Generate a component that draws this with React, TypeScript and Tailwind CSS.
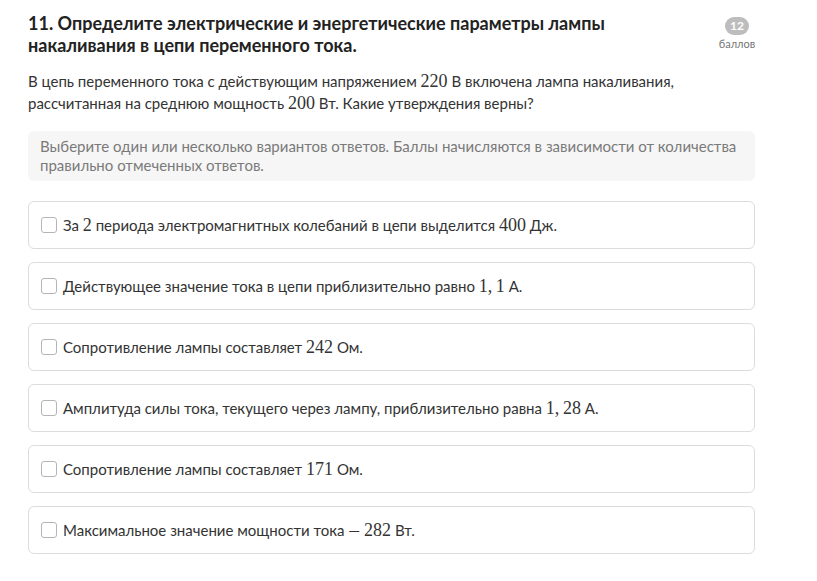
import React from 'react';

function M({ children }: { children: React.ReactNode }) {
  return <span className="font-['Liberation_Serif',serif] text-[18px]">{children}</span>;
}

const options: React.ReactNode[] = [
  <>За <M>2</M> периода электромагнитных колебаний в цепи выделится <M>400</M> Дж.</>,
  <>Действующее значение тока в цепи приблизительно равно <M>1,&thinsp;1</M> А.</>,
  <>Сопротивление лампы составляет <M>242</M> Ом.</>,
  <>Амплитуда силы тока, текущего через лампу, приблизительно равна <M>1,&thinsp;28</M> А.</>,
  <>Сопротивление лампы составляет <M>171</M> Ом.</>,
  <>Максимальное значение мощности тока — <M>282</M> Вт.</>,
];

export default function App() {
  return (
    <div className="min-h-[581px] bg-white font-['Lato','Noto_Sans',sans-serif] text-[#333]">
      <div className="ml-[28px] w-[727px] pt-[12px]">
        {/* заголовок */}
        <div className="flex items-start justify-between">
          <h2 className="text-[18px] font-bold leading-[22px] text-[#222]">
            11. Определите электрические и энергетические параметры лампы
            <br />
            накаливания в цепи переменного тока.
          </h2>
          <div className="mr-[-7px] mt-[5px] flex w-[50px] flex-col items-center">
            <span className="flex h-[18px] w-[24px] items-center justify-center rounded-full bg-[#bdbdbd] text-[12px] font-bold leading-none text-white">
              12
            </span>
            <span className="mt-[2px] text-[11px] leading-[14px] text-[#757575]">баллов</span>
          </div>
        </div>

        <p className="mt-[14px] text-[15px] leading-[22px] text-[#333]">
          В цепь переменного тока с действующим напряжением <M>220</M> В включена лампа накаливания,
          <br />
          рассчитанная на среднюю мощность <M>200</M> Вт. Какие утверждения верны?
        </p>

        <div className="mt-[17px] rounded-[6px] bg-[#f6f6f6] px-[12px] py-[6px] text-[15px] leading-[19px] text-[#7a7a7a]">
          Выберите один или несколько вариантов ответов. Баллы начисляются в зависимости от количества
          <br />
          правильно отмеченных ответов.
        </div>

        <div className="mt-[20px] flex flex-col gap-[13px]">
          {options.map((o, i) => (
            <label
              key={i}
              className="flex h-[48px] items-center gap-[6px] rounded-[6px] border border-[#dcdcdc] px-[12px] text-[15px] text-[#333]"
            >
              <span className="h-[16px] w-[16px] shrink-0 rounded-[3px] border border-[#b5b5b5] bg-white" />
              <span>{o}</span>
            </label>
          ))}
        </div>
      </div>
    </div>
  );
}
